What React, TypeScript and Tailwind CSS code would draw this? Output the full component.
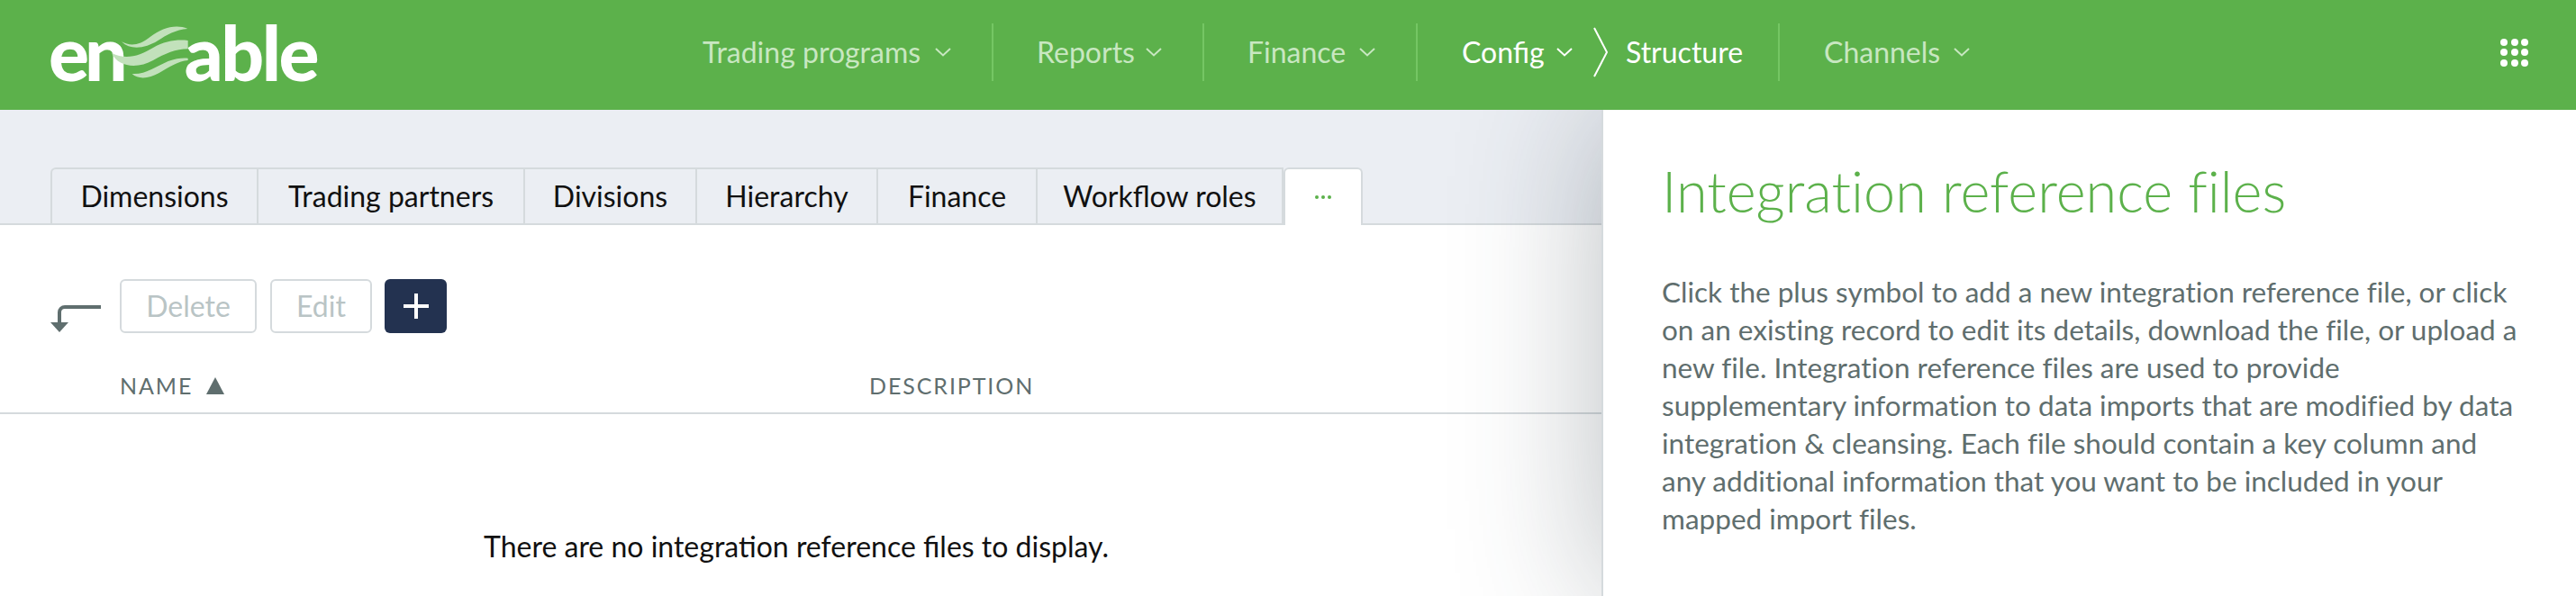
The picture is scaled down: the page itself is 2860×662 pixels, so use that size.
import React from 'react';

const FONT = "font-['Lato','Liberation_Sans',sans-serif]";

type NavItem = { label: string; width: string };

const navItems: NavItem[] = [
    { label: 'Trading programs', width: 'w-[371px]' },
    { label: 'Reports', width: 'w-[234px]' },
    { label: 'Finance', width: 'w-[237px]' },
];

const tabs = [
    { label: 'Dimensions', width: 'w-[231px]' },
    { label: 'Trading partners', width: 'w-[296px]' },
    { label: 'Divisions', width: 'w-[191px]' },
    { label: 'Hierarchy', width: 'w-[201px]' },
    { label: 'Finance', width: 'w-[177px]' },
    { label: 'Workflow roles', width: 'w-[273px]' },
];

const Chevron = ({ className }: { className: string }) => (
    <svg className={className} width="18" height="10" viewBox="0 0 18 10" fill="none" stroke="currentColor" strokeWidth="2">
        <path d="M1 1l8 7.5L17 1" />
    </svg>
);

const Logo = () => (
    <div className="relative flex h-[58px] w-[296px] items-end text-white font-['Lato',sans-serif] font-black leading-[58px]">
        <span className="ml-[-2px] h-[58px] text-[84px] tracking-[-5px]">en</span>
        <span className="ml-auto h-[58px] text-[84px] tracking-[-2.5px]">able</span>
        {/* waves */}
        <svg className="absolute left-[64px] top-[-2px]" width="94" height="64" viewBox="300 30 282 192" fill="#c2e1bb">
            <path d="M345 88C375 104 405 100 440 72C480 42 525 28 565 45C525 48 495 65 465 85C425 110 375 118 345 88Z" />
            <path d="M312 126C360 150 405 135 450 108C490 85 530 80 566 84L566 112C525 112 490 128 450 150C400 178 335 175 312 126Z" />
            <path d="M380 195C425 198 460 170 500 153C525 144 548 141 566 143L566 150C535 152 505 172 470 192C435 212 400 214 380 195Z" />
        </svg>
    </div>
);

const AppsIcon = () => (
    <div className="grid grid-cols-3 gap-x-[3.5px] gap-y-[3.5px]">
        {Array.from({ length: 9 }).map((_, i) => (
            <div key={i} className="h-[8px] w-[8px] rounded-full bg-white" />
        ))}
    </div>
);

const Header = () => (
    <header className="relative z-10 flex h-[122px] items-center bg-[#5cb14b] pl-[56px] pb-[6px]">
        <Logo />
        <nav className="ml-[380px] flex items-center whitespace-nowrap text-[32px] text-[#c8e7c1]">
            {navItems.map((item) => (
                <div key={item.label} className={`flex h-[64px] items-center justify-between border-r-2 border-[#75c664] pl-[48px] pr-[45px] ${item.width}`}>
                    <span>{item.label}</span>
                    <Chevron className="shrink-0" />
                </div>
            ))}
            <div className="flex h-[64px] w-[402px] items-center border-r-2 border-[#75c664] pl-[49px] text-white">
                <span className="w-[90px]">Config</span>
                <Chevron className="ml-[15px] shrink-0" />
                <svg className="ml-[22px] shrink-0" width="18" height="56" viewBox="0 0 18 56" fill="none" stroke="currentColor" strokeWidth="2">
                    <path d="M2 1l14 27L2 55" />
                </svg>
                <span className="ml-[19px]">Structure</span>
            </div>
            <div className="flex h-[64px] items-center pl-[49px]">
                <span className="w-[130px]">Channels</span>
                <Chevron className="ml-[14px] shrink-0" />
            </div>
        </nav>
        <div className="ml-auto pr-[53px]">
            <AppsIcon />
        </div>
    </header>
);

const Tabs = () => (
    <div className="border-b-2 border-[#d5dadd] bg-[#ebeef3] pl-[56px] pt-[64px]">
        <div className="flex h-[62px] text-[32px] text-[#111]">
            {tabs.map((tab, i) => (
                <div
                    key={tab.label}
                    className={`flex items-center justify-center border-r-2 border-t-2 border-[#d5dadd] ${tab.width} ${i === 0 ? 'rounded-tl-[6px] border-l-2' : ''}`}
                >
                    {tab.label}
                </div>
            ))}
            {/* active tab sits on top of the bottom border */}
            <div className="mb-[-2px] flex w-[88px] items-center justify-center gap-[3px] rounded-t-[6px] border-x-2 border-t-2 border-[#d5dadd] bg-white">
                <span className="h-[4px] w-[4px] rounded-full bg-[#5cb14b]" />
                <span className="h-[4px] w-[4px] rounded-full bg-[#5cb14b]" />
                <span className="h-[4px] w-[4px] rounded-full bg-[#5cb14b]" />
            </div>
        </div>
    </div>
);

const Toolbar = () => (
    <div className="flex items-end pl-[56px] pt-[60px]">
        <svg width="56" height="32" viewBox="0 0 56 32" className="mb-[1px]">
            <path d="M56 4H16a6 6 0 0 0-6 6v14" fill="none" stroke="#5f6e6e" strokeWidth="4" />
            <path d="M0 21h20L10 32z" fill="#5f6e6e" />
        </svg>
        <button className="ml-[21px] h-[60px] w-[152px] rounded-[6px] border-2 border-[#d5dadd] text-[32px] text-[#b9c4c5]">Delete</button>
        <button className="ml-[15px] h-[60px] w-[113px] rounded-[6px] border-2 border-[#d5dadd] text-[32px] text-[#b9c4c5]">Edit</button>
        <button className="ml-[14px] flex h-[60px] w-[69px] items-center justify-center rounded-[6px] bg-[#233250]">
            <svg width="28" height="28" viewBox="0 0 28 28" stroke="#fff" strokeWidth="4">
                <path d="M14 0v28M0 14h28" />
            </svg>
        </button>
    </div>
);

const TableHead = () => (
    <div className="flex h-[90px] items-end border-b-2 border-[#d5dadd] pb-[15px] pl-[133px] text-[25px] leading-[30px] tracking-[1.9px] text-[#5f6e6e]">
        <div className="flex w-[832px] items-center">
            <span>NAME</span>
            <svg className="ml-[15px]" width="20" height="19" viewBox="0 0 20 19" fill="#5f6e6e">
                <path d="M10 0l10 19H0z" />
            </svg>
        </div>
        <span>DESCRIPTION</span>
    </div>
);

const SidePanel = () => (
    <aside className="flex w-[1082px] shrink-0 flex-col border-l-2 border-[#d5dadd] bg-white pl-[65px] shadow-[0_0_150px_rgba(50,60,70,0.33)]">
        <h1 className="mt-[52px] text-[63px] font-light leading-[76px] text-[#5cb14b] [font-variant-ligatures:none]">Integration reference files</h1>
        <p className="mt-[53px] w-[955px] text-[31.5px] leading-[42px] text-[#5f6e6e] [font-variant-ligatures:none]">
            Click the plus symbol to add a new integration reference file, or click on an existing record to edit its details, download the file, or upload a new file. Integration reference files are used to provide supplementary information to data imports that are modified by data integration &amp; cleansing. Each file should contain a key column and any additional information that you want to be included in your mapped import files.
        </p>
    </aside>
);

export default function App() {
    return (
        <div className={`flex h-[662px] flex-col overflow-hidden bg-white ${FONT}`}>
            <Header />
            <div className="flex flex-1">
                <main className="flex-1">
                    <Tabs />
                    <Toolbar />
                    <TableHead />
                    <p className="mt-[126px] pr-[10px] text-center text-[32px] leading-[42px] text-[#111]">
                        There are no integration reference files to display.
                    </p>
                </main>
                <SidePanel />
            </div>
        </div>
    );
}
